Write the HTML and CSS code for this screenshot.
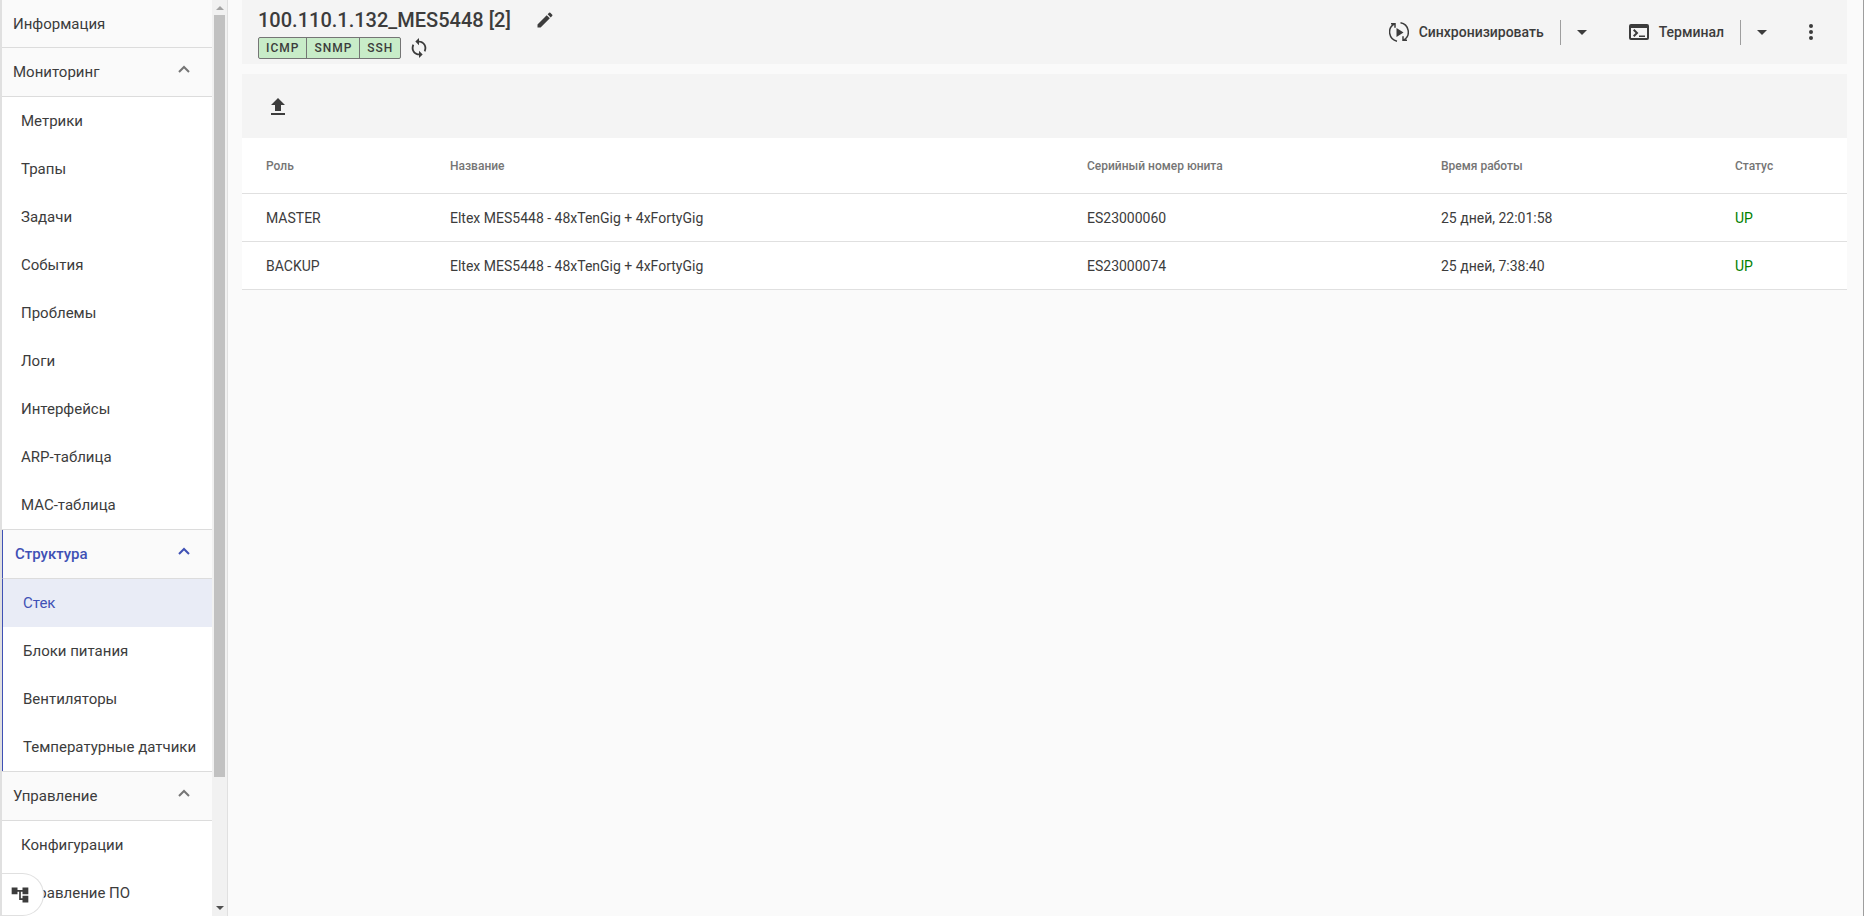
FILE: index.html
```html
<!DOCTYPE html>
<html lang="ru">
<head>
    <meta charset="UTF-8">
    <meta name="viewport" content="width=device-width, initial-scale=1.0">
    <title>100.110.1.132_MES5448 [2]</title>
    <link rel="stylesheet" href="styles.css">
</head>
<body>
    <div class="app">
        <aside class="sidebar">
            <nav class="menu">
                <a class="menu-head" href="#">Информация</a>
                <section class="group">
                    <button class="menu-head" type="button">Мониторинг
                        <svg class="chevron" viewBox="0 0 12 8"><path d="M1 7l5-5 5 5"/></svg>
                    </button>
                    <a class="menu-item" href="#">Метрики</a>
                    <a class="menu-item" href="#">Трапы</a>
                    <a class="menu-item" href="#">Задачи</a>
                    <a class="menu-item" href="#">События</a>
                    <a class="menu-item" href="#">Проблемы</a>
                    <a class="menu-item" href="#">Логи</a>
                    <a class="menu-item" href="#">Интерфейсы</a>
                    <a class="menu-item" href="#">ARP-таблица</a>
                    <a class="menu-item" href="#">MAC-таблица</a>
                </section>
                <section class="group active">
                    <button class="menu-head" type="button">Структура
                        <svg class="chevron" viewBox="0 0 12 8"><path d="M1 7l5-5 5 5"/></svg>
                    </button>
                    <a class="menu-item selected" href="#">Стек</a>
                    <a class="menu-item" href="#">Блоки питания</a>
                    <a class="menu-item" href="#">Вентиляторы</a>
                    <a class="menu-item" href="#">Температурные датчики</a>
                </section>
                <section class="group">
                    <button class="menu-head" type="button">Управление
                        <svg class="chevron" viewBox="0 0 12 8"><path d="M1 7l5-5 5 5"/></svg>
                    </button>
                    <a class="menu-item" href="#">Конфигурации</a>
                    <a class="menu-item" href="#">Управление ПО</a>
                </section>
            </nav>
            <div class="scrollbar">
                <svg class="arrow arrow-up" viewBox="0 0 8 4"><path d="M0 4l4-4 4 4z"/></svg>
                <div class="track"><div class="thumb"></div></div>
                <svg class="arrow" viewBox="0 0 8 4"><path d="M0 0h8L4 4z"/></svg>
            </div>
            <button class="tree-button" type="button" aria-label="Дерево устройств">
                <svg class="icon-tree" viewBox="0 0 24 24"><path d="M22 11V3h-7v3H9V3H2v8h7V8h2v10h4v3h7v-8h-7v3h-2V8h2v3z"/></svg>
            </button>
        </aside>

        <main class="content">
            <header class="header">
                <div class="device">
                    <div class="title-row">
                        <h1>100.110.1.132_MES5448 [2]</h1>
                        <button class="icon-button" type="button" aria-label="Редактировать">
                            <svg class="icon-edit" viewBox="0 0 24 24"><path d="M3 17.25V21h3.75L17.81 9.94l-3.75-3.75L3 17.25zM20.71 7.04a1 1 0 0 0 0-1.41l-2.34-2.34a1 1 0 0 0-1.41 0l-1.83 1.83 3.75 3.75 1.83-1.83z"/></svg>
                        </button>
                    </div>
                    <div class="status-row">
                        <div class="badges">
                            <span>ICMP</span>
                            <span>SNMP</span>
                            <span>SSH</span>
                        </div>
                        <button class="icon-button" type="button" aria-label="Обновить">
                            <svg class="icon-refresh" viewBox="0 0 24 24"><path d="M12 4V1L8 5l4 4V6c3.31 0 6 2.69 6 6 0 1.01-.25 1.97-.7 2.8l1.46 1.46A7.93 7.93 0 0 0 20 12c0-4.42-3.58-8-8-8zm0 14c-3.31 0-6-2.69-6-6 0-1.01.25-1.97.7-2.8L5.24 7.74A7.93 7.93 0 0 0 4 12c0 4.42 3.58 8 8 8v3l4-4-4-4v3z"/></svg>
                        </button>
                    </div>
                </div>
                <div class="actions">
                    <button class="action" type="button">
                        <svg class="icon-sync" viewBox="0 0 20 20">
                            <path class="line" d="M8 19.2A9.3 9.3 0 0 1 5 2.2M2 1.7h4v4M11.500 .8A9.3 9.3 0 0 1 15 17.8M18 18.3h-4v-4"/>
                            <path d="M7.5 6v9l7-4.5z"/>
                        </svg>
                        Синхронизировать
                    </button>
                    <button class="dropdown" type="button" aria-label="Варианты синхронизации">
                        <svg class="caret" viewBox="0 0 10 5"><path d="M0 0h10L5 5z"/></svg>
                    </button>
                    <button class="action" type="button">
                        <svg class="icon-terminal" viewBox="0 0 20 16"><path fill-rule="evenodd" d="M2 0h16a2 2 0 0 1 2 2v12a2 2 0 0 1-2 2H2a2 2 0 0 1-2-2V2a2 2 0 0 1 2-2zM2 4v10h16V4zM5.4 5L9.4 9l-4 4L4 11.6 6.6 9 4 6.4zM10 11.5h6V13h-6z"/></svg>
                        Терминал
                    </button>
                    <button class="dropdown" type="button" aria-label="Варианты терминала">
                        <svg class="caret" viewBox="0 0 10 5"><path d="M0 0h10L5 5z"/></svg>
                    </button>
                    <button class="icon-button" type="button" aria-label="Ещё">
                        <svg class="icon-more" viewBox="0 0 4 16"><circle cx="2" cy="2" r="2"/><circle cx="2" cy="8" r="2"/><circle cx="2" cy="14" r="2"/></svg>
                    </button>
                </div>
            </header>

            <div class="toolbar">
                <button class="icon-button" type="button" aria-label="Экспорт">
                    <svg class="icon-upload" viewBox="0 0 14 17"><path d="M4 13h6V7h4L7 0 0 7h4zM0 15h14v2H0z"/></svg>
                </button>
            </div>

            <table class="units">
                <colgroup>
                    <col class="col-role">
                    <col class="col-name">
                    <col class="col-serial">
                    <col class="col-uptime">
                    <col class="col-status">
                </colgroup>
                <thead>
                    <tr>
                        <th>Роль</th>
                        <th>Название</th>
                        <th>Серийный номер юнита</th>
                        <th>Время работы</th>
                        <th>Статус</th>
                    </tr>
                </thead>
                <tbody>
                    <tr>
                        <td>MASTER</td>
                        <td>Eltex MES5448 - 48xTenGig + 4xFortyGig</td>
                        <td>ES23000060</td>
                        <td>25 дней, 22:01:58</td>
                        <td class="up">UP</td>
                    </tr>
                    <tr>
                        <td>BACKUP</td>
                        <td>Eltex MES5448 - 48xTenGig + 4xFortyGig</td>
                        <td>ES23000074</td>
                        <td>25 дней, 7:38:40</td>
                        <td class="up">UP</td>
                    </tr>
                </tbody>
            </table>
        </main>
    </div>
</body>
</html>
```
FILE: styles.css
```css
* {
    box-sizing: border-box;
}
body {
    margin: 0;
    font-family: Roboto, "Liberation Sans", sans-serif;
    font-size: 14px;
    color: #3c3c3c;
    background-color: #fafafa;
}
button {
    padding: 0;
    border: none;
    background: none;
    font: inherit;
    color: inherit;
    cursor: pointer;
}
a {
    color: inherit;
    text-decoration: none;
}
svg {
    display: block;
    fill: currentColor;
}
.app {
    display: flex;
    height: 100vh;
    border-left: 2px solid #e0e0e0;
    border-right: 1px solid #9e9e9e;
}

/* sidebar */
.sidebar {
    position: relative;
    display: flex;
    flex: none;
    width: 226px;
    border-right: 1px solid #e0e0e0;
}
.menu {
    flex: 1;
    overflow: hidden;
    background-color: white;
    font-size: 15px;
}
.menu-head {
    display: flex;
    align-items: center;
    justify-content: space-between;
    width: 100%;
    height: 49px;
    padding: 0 22px 0 11px;
    border-bottom: 1px solid #dcdcdc;
    background-color: #fafafa;
}
a.menu-head {
    height: 48px;
}
.group + .group {
    border-top: 1px solid #dcdcdc;
}
.menu-item {
    display: flex;
    align-items: center;
    height: 48px;
    padding-left: 19px;
}
.chevron {
    width: 12px;
    height: 8px;
    margin-bottom: 6px;
    fill: none;
    stroke: #757575;
    stroke-width: 2;
}
.active .menu-head,
.active .menu-item {
    border-left: 1px solid #3f51b5;
}
.active .menu-head {
    padding-left: 12px;
    font-weight: 500;
    color: #3f51b5;
}
.active .menu-item {
    padding-left: 20px;
}
.active .chevron {
    stroke: #3f51b5;
}
.menu-item.selected {
    color: #3f51b5;
    background-color: #e9ecf6;
}
.scrollbar {
    display: flex;
    flex-direction: column;
    align-items: center;
    width: 15px;
    padding: 6px 0;
    background-color: #f1f1f1;
}
.track {
    flex: 1;
    width: 11px;
    margin: 5px 0;
}
.thumb {
    height: 86%;
    background-color: #c1c1c1;
}
.arrow {
    width: 8px;
    height: 4px;
    fill: #505050;
}
.arrow-up {
    fill: #a3a3a3;
}
.tree-button {
    position: absolute;
    left: 0;
    bottom: 0;
    width: 42px;
    height: 43px;
    padding-left: 8px;
    border: 1px solid #e0e0e0;
    border-left: none;
    border-radius: 0 22px 22px 0;
    background-color: white;
}
.icon-tree {
    width: 20px;
    height: 20px;
}

/* content */
.content {
    flex: 1;
    min-width: 0;
    padding: 0 16px 0 14px;
}
.header {
    display: flex;
    justify-content: space-between;
    height: 64px;
    margin-bottom: 10px;
    padding: 0 34px 0 16px;
    background-color: #f4f4f4;
}
.title-row {
    display: flex;
    align-items: center;
    gap: 24px;
    height: 37px;
    padding-top: 2px;
}
h1 {
    margin: 0;
    font-size: 20px;
    font-weight: 500;
}
.icon-edit {
    width: 20px;
    height: 20px;
}
.status-row {
    display: flex;
    align-items: center;
    gap: 7px;
    height: 22px;
}
.badges {
    display: flex;
    border: 1px solid #757575;
    border-radius: 2px;
    background-color: #c8ecc8;
    font-size: 12px;
    font-weight: 500;
    line-height: 20px;
    letter-spacing: 1px;
}
.badges span {
    padding: 0 7px;
}
.badges span + span {
    border-left: 1px solid #757575;
}
.icon-refresh {
    width: 22px;
    height: 22px;
}
.actions {
    display: flex;
    align-items: center;
    font-weight: 500;
}
.action {
    display: flex;
    align-items: center;
    gap: 10px;
    padding-right: 16px;
}
.dropdown {
    display: flex;
    align-items: center;
    height: 25px;
    margin-right: 42px;
    padding-left: 16px;
    border-left: 1px solid #9e9e9e;
}
.icon-sync {
    width: 20px;
    height: 20px;
}
.icon-sync .line {
    fill: none;
    stroke: currentColor;
    stroke-width: 1.5;
}
.icon-terminal {
    width: 20px;
    height: 16px;
}
.caret {
    width: 10px;
    height: 5px;
}
.icon-more {
    width: 4px;
    height: 16px;
}
.toolbar {
    display: flex;
    align-items: center;
    height: 64px;
    padding-left: 29px;
    background-color: #f4f4f4;
}
.icon-upload {
    width: 14px;
    height: 17px;
}

/* table */
.units {
    width: 100%;
    table-layout: fixed;
    border-collapse: separate;
    border-spacing: 0;
    background-color: white;
}
.col-role { width: 208px; }
.col-name { width: 637px; }
.col-serial { width: 354px; }
.col-uptime { width: 294px; }
.col-status { width: 112px; }
th,
td {
    height: 48px;
    padding: 0;
    border-bottom: 1px solid #e0e0e0;
    text-align: left;
}
th {
    height: 56px;
    font-size: 12px;
    font-weight: 500;
    color: #757575;
}
th:first-child,
td:first-child {
    padding-left: 24px;
}
.up {
    color: green;
}
```
